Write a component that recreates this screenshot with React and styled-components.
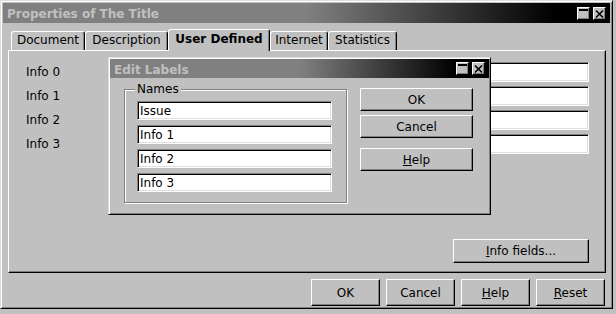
import React from 'react';
import styled, {createGlobalStyle} from 'styled-components';

const tabs = [
  {label: 'Document', width: 74},
  {label: 'Description', width: 83},
  {label: 'User Defined', width: 102, active: true},
  {label: 'Internet', width: 58},
  {label: 'Statistics', width: 69},
];

const infoRows = ['Info 0', 'Info 1', 'Info 2', 'Info 3'];
const names = ['Issue', 'Info 1', 'Info 2', 'Info 3'];

const CaptionButtons = () => (
  <CaptionGroup>
    <CaptionButton type="button" aria-label="Minimize">
      <svg width="11" height="11" viewBox="0 0 11 11">
        <rect x="1" y="1" width="9" height="2" fill="#000" />
      </svg>
    </CaptionButton>
    <CaptionButton type="button" aria-label="Close">
      <svg width="11" height="11" viewBox="0 0 11 11">
        <path d="M2 2.5L9 9.5M9 2.5L2 9.5" stroke="#000" strokeWidth="1.6" fill="none" />
      </svg>
    </CaptionButton>
  </CaptionGroup>
);

const App = () => {
  return (
    <>
      <GlobalStyle />
      <Window>
        <TitleBar $height={20}>
          <TitleText>Properties of The Title</TitleText>
          <CaptionButtons />
        </TitleBar>

        <TabWidget>
          <TabRow>
            {tabs.map((tab) => (
              <Tab key={tab.label} $width={tab.width} $active={tab.active}>
                {tab.label}
              </Tab>
            ))}
          </TabRow>
          <Panel>
            <InfoGrid>
              {infoRows.map((label) => (
                <React.Fragment key={label}>
                  <Label>{label}</Label>
                  <TextField $height={20} readOnly defaultValue="" />
                </React.Fragment>
              ))}
            </InfoGrid>
            <PushButton type="button" $width={136} $height={24} $end>
              <u>I</u>nfo fields...
            </PushButton>
          </Panel>
        </TabWidget>

        <ButtonRow>
          <PushButton type="button" $width={69} $height={27}>OK</PushButton>
          <PushButton type="button" $width={69} $height={27}>Cancel</PushButton>
          <PushButton type="button" $width={69} $height={27}>
            <u>H</u>elp
          </PushButton>
          <PushButton type="button" $width={69} $height={27}>
            <u>R</u>eset
          </PushButton>
        </ButtonRow>

        <Dialog>
          <TitleBar $height={19}>
            <TitleText>Edit Labels</TitleText>
            <CaptionButtons />
          </TitleBar>
          <DialogBody>
            <GroupBox>
              <Legend>Names</Legend>
              {names.map((name) => (
                <TextField key={name} $height={19} readOnly defaultValue={name} />
              ))}
            </GroupBox>
            <DialogButtons>
              <PushButton type="button" $width={113} $height={23}>OK</PushButton>
              <PushButton type="button" $width={113} $height={23}>Cancel</PushButton>
              <PushButton type="button" $width={113} $height={23} $gap={6}>
                <u>H</u>elp
              </PushButton>
            </DialogButtons>
          </DialogBody>
        </Dialog>
      </Window>
    </>
  );
};

export default App;

const GlobalStyle = createGlobalStyle`
  body {
    margin: 0;
    background: #c0c0c0;
    font-family: "DejaVu Sans", "Liberation Sans", sans-serif;
    font-size: 12px;
    color: #000;
  }
`;

const Window = styled.div`
  position: relative;
  box-sizing: border-box;
  width: 613px;
  height: 309px;
  padding: 2px;
  border: 1px solid;
  border-color: #dfdfdf #000 #000 #dfdfdf;
  box-shadow: inset 1px 1px 0 #fff, inset -1px -1px 0 #808080;
  background: #c0c0c0;
  display: flex;
  flex-direction: column;
`;

const TitleBar = styled.div`
  flex-shrink: 0;
  box-sizing: border-box;
  height: ${({$height}) => $height}px;
  display: flex;
  align-items: center;
  padding: 0 4px;
  background: linear-gradient(to right, #808080 0%, #808080 50%, #000 91%, #000 100%);
  color: #c0c0c0;
  font-weight: bold;
`;

const TitleText = styled.div`
  flex: 1;
  padding-top: 2px;
  white-space: nowrap;
`;

const CaptionGroup = styled.div`
  display: flex;
  gap: 3px;
`;

const CaptionButton = styled.button`
  box-sizing: border-box;
  width: 13px;
  height: 13px;
  padding: 0;
  display: flex;
  background: #c0c0c0;
  border: 1px solid;
  border-color: #fff #000 #000 #fff;
  box-shadow: inset -1px -1px 0 #808080;
`;

const TabWidget = styled.div`
  flex: 1;
  display: flex;
  flex-direction: column;
  margin: 6px 4px 0 5px;
`;

const TabRow = styled.div`
  flex-shrink: 0;
  height: 21px;
  display: flex;
  align-items: flex-end;
  padding-left: 3px;
`;

const Tab = styled.div`
  position: relative;
  z-index: ${({$active}) => ($active ? 1 : 0)};
  box-sizing: border-box;
  width: ${({$width}) => $width}px;
  height: ${({$active}) => ($active ? 22 : 19)}px;
  margin-bottom: ${({$active}) => ($active ? -1 : 0)}px;
  border: 1px solid;
  border-bottom: 0;
  border-color: #fff #000 #000 #fff;
  border-radius: 3px 3px 0 0;
  box-shadow: inset -1px 0 0 #808080;
  background: #c0c0c0;
  text-align: center;
  line-height: ${({$active}) => ($active ? 19 : 17)}px;
  font-weight: ${({$active}) => ($active ? 'bold' : 'normal')};
  white-space: nowrap;
`;

const Panel = styled.div`
  flex: 1;
  box-sizing: border-box;
  display: flex;
  flex-direction: column;
  padding: 11px 16px 9px 17px;
  border: 1px solid;
  border-color: #fff #000 #000 #fff;
  box-shadow: inset -1px -1px 0 #808080;
`;

const InfoGrid = styled.div`
  display: grid;
  grid-template-columns: 100px 1fr;
  grid-auto-rows: 20px;
  row-gap: 4px;
  align-items: center;
`;

const Label = styled.div`
  white-space: nowrap;
`;

const TextField = styled.input`
  box-sizing: border-box;
  width: 100%;
  height: ${({$height}) => $height}px;
  margin: 0;
  padding: 0 2px;
  font: inherit;
  color: #000;
  background: #fff;
  border: 1px solid;
  border-color: #808080 #fff #fff #808080;
  box-shadow: inset 1px 1px 0 #000, inset -1px -1px 0 #dfdfdf;
  outline: none;
`;

const PushButton = styled.button`
  box-sizing: border-box;
  flex-shrink: 0;
  width: ${({$width}) => $width}px;
  height: ${({$height}) => $height}px;
  margin-top: ${({$gap}) => ($gap ? `${$gap}px` : 0)};
  ${({$end}) => $end && 'margin-top: auto; align-self: flex-end;'}
  padding: 0;
  font: inherit;
  color: #000;
  background: #c0c0c0;
  border: 1px solid;
  border-color: #fff #000 #000 #fff;
  box-shadow: inset -1px -1px 0 #808080;
  white-space: nowrap;
`;

const ButtonRow = styled.div`
  flex-shrink: 0;
  display: flex;
  justify-content: flex-end;
  gap: 6px;
  margin: 6px 5px 0 0;
`;

const Dialog = styled.div`
  position: absolute;
  left: 107px;
  top: 56px;
  box-sizing: border-box;
  width: 383px;
  height: 158px;
  padding: 1px;
  border: 1px solid;
  border-color: #dfdfdf #000 #000 #dfdfdf;
  box-shadow: inset 1px 1px 0 #fff, inset -1px -1px 0 #808080;
  background: #c0c0c0;
  display: flex;
  flex-direction: column;
`;

const DialogBody = styled.div`
  display: flex;
  align-items: flex-start;
  gap: 13px;
  padding: 10px 15px 0 14px;
`;

const GroupBox = styled.div`
  position: relative;
  box-sizing: border-box;
  width: 223px;
  height: 114px;
  margin-top: 1px;
  padding: 11px 14px 0 12px;
  border: 1px solid #808080;
  box-shadow: inset 1px 1px 0 #fff, 1px 1px 0 #fff;
  display: flex;
  flex-direction: column;
  gap: 5px;
`;

const Legend = styled.span`
  position: absolute;
  top: -8px;
  left: 10px;
  padding: 0 2px;
  line-height: 14px;
  background: #c0c0c0;
`;

const DialogButtons = styled.div`
  display: flex;
  flex-direction: column;
  gap: 4px;
`;
